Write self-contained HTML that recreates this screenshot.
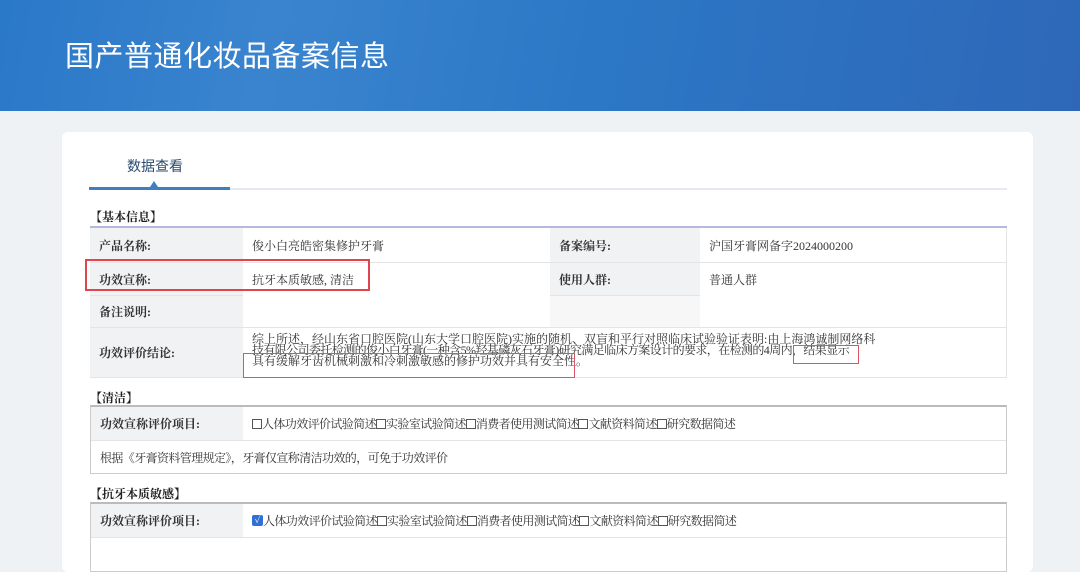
<!DOCTYPE html>
<html><head><meta charset="utf-8"><style>
*{margin:0;padding:0;box-sizing:border-box}
body{width:1080px;height:563px;overflow:hidden;background:#eef2f5;font-family:"Liberation Serif","Noto Serif CJK SC",serif;color:#333;position:relative}
.hdr{position:absolute;left:0;top:0;width:1080px;height:111px;background:linear-gradient(100deg,#2a78c8 0%,#3a84cf 25%,#2c78c6 55%,#2e67b8 100%)}
.hdr h1{position:absolute;left:65px;top:33px;font-size:29px;font-weight:normal;color:#fff;font-family:"Liberation Sans","Noto Sans CJK SC",sans-serif;letter-spacing:0.5px}
.card{position:absolute;left:62px;top:132px;width:971px;height:440px;background:#fff;border-radius:6px}
.abs{position:absolute}
.tab{left:127px;top:156px;font-size:14px;color:#2b4a6e;font-family:"Liberation Sans","Noto Sans CJK SC",sans-serif}
.sec{font-size:12px;font-weight:bold;color:#222}
.cell{position:absolute;font-size:12px;display:flex;align-items:center;padding-left:9px}
.lab{background:#f1f2f3;font-weight:bold;color:#333}
.red{position:absolute;border:2px solid #e0444c}
.redt{position:absolute;border:1.5px solid #d9566a}
.tight{letter-spacing:-0.6px}
.cb{display:inline-block;width:10px;height:10px;border:1px solid #555;vertical-align:-1px;background:#fff}
.cbc{display:inline-block;width:11px;height:11px;background:#2f6fd6;border-radius:2px;vertical-align:-1px;color:#fff;font-size:10px;line-height:11px;text-align:center}
</style></head><body>
<div class="hdr"><h1>国产普通化妆品备案信息</h1></div>
<div class="card"></div>
<div class="abs tab">数据查看</div>
<div class="abs" style="left:89px;top:188px;width:918px;height:2px;background:#e6eaee"></div>
<div class="abs" style="left:89px;top:187px;width:141px;height:3px;background:#3f7fbf"></div>
<div class="abs" style="left:150px;top:181px;width:0;height:0;border-left:4px solid transparent;border-right:4px solid transparent;border-bottom:6px solid #3f7fbf"></div>

<div class="abs sec" style="left:90px;top:208px">【基本信息】</div>
<div class="abs" style="left:90px;top:226px;width:917px;height:2px;background:#b8b8de"></div>
<div class="abs" style="left:90px;top:228px;width:917px;height:150px;border:1px solid #e4e4e4;border-top:none"></div>
<div class="cell lab" style="left:90px;top:228px;width:153px;height:34px">产品名称:</div>
<div class="cell" style="left:243px;top:228px;width:307px;height:34px">俊小白亮皓密集修护牙膏</div>
<div class="cell lab" style="left:550px;top:228px;width:150px;height:34px">备案编号:</div>
<div class="cell" style="left:700px;top:228px;width:307px;height:34px">沪国牙膏网备字2024000200</div>
<div class="cell lab" style="left:90px;top:262px;width:153px;height:33px;border-top:1px solid #e4e4e4">功效宣称:</div>
<div class="cell" style="left:243px;top:262px;width:307px;height:33px;border-top:1px solid #e4e4e4">抗牙本质敏感, 清洁</div>
<div class="cell lab" style="left:550px;top:262px;width:150px;height:33px;border-top:1px solid #e4e4e4">使用人群:</div>
<div class="cell" style="left:700px;top:262px;width:307px;height:33px;border-top:1px solid #e4e4e4">普通人群</div>
<div class="cell lab" style="left:90px;top:295px;width:153px;height:32px;border-top:1px solid #e4e4e4">备注说明:</div>
<div class="cell lab" style="left:550px;top:295px;width:150px;height:32px;border-top:1px solid #e4e4e4;background:#f7f7f7"></div>
<div class="cell lab" style="left:90px;top:327px;width:153px;height:50px;border-top:1px solid #e4e4e4">功效评价结论:</div>
<div class="abs" style="left:243px;top:327px;width:764px;height:1px;background:#e4e4e4"></div>
<div class="abs" style="left:252px;top:334px;font-size:12px;line-height:11px;width:700px;white-space:nowrap">综上所述，经山东省口腔医院(山东大学口腔医院)实施的随机、双盲和平行对照临床试验验证表明:由上海鸿诚制网络科<br><span class="tight">技有限公司委托检测的俊小白牙膏(一种含5%羟基磷灰石牙膏)研究满足临床方案设计的要求，在检测的4周内，结果显示</span><br>具有缓解牙齿机械刺激和冷刺激敏感的修护功效并具有安全性。</div>
<div class="red" style="left:85px;top:259px;width:285px;height:32px"></div>
<div class="redt" style="left:243px;top:353px;width:332px;height:25px"></div>
<div class="redt" style="left:793px;top:345px;width:66px;height:19px"></div>

<div class="abs sec" style="left:90px;top:389px">【清洁】</div>
<div class="abs" style="left:90px;top:405px;width:917px;height:69px;border:1px solid #ccc;border-top:2px solid #bbb"></div>
<div class="cell lab" style="left:91px;top:407px;width:152px;height:33px">功效宣称评价项目:</div>
<div class="cell tight" style="left:243px;top:407px;width:600px;height:33px"><span class="cb"></span>人体功效评价试验简述<span class="cb"></span>实验室试验简述<span class="cb"></span>消费者使用测试简述<span class="cb"></span>文献资料简述<span class="cb"></span>研究数据简述</div>
<div class="abs" style="left:91px;top:440px;width:915px;height:1px;background:#e4e4e4"></div>
<div class="cell tight" style="left:91px;top:441px;width:700px;height:32px">根据《牙膏资料管理规定》，牙膏仅宣称清洁功效的，可免于功效评价</div>

<div class="abs sec" style="left:90px;top:485px">【抗牙本质敏感】</div>
<div class="abs" style="left:90px;top:502px;width:917px;height:70px;border:1px solid #ccc;border-top:2px solid #bbb"></div>
<div class="cell lab" style="left:91px;top:504px;width:152px;height:33px">功效宣称评价项目:</div>
<div class="cell tight" style="left:243px;top:504px;width:600px;height:33px"><span class="cbc">✓</span>人体功效评价试验简述<span class="cb"></span>实验室试验简述<span class="cb"></span>消费者使用测试简述<span class="cb"></span>文献资料简述<span class="cb"></span>研究数据简述</div>
<div class="abs" style="left:91px;top:537px;width:915px;height:1px;background:#e4e4e4"></div>
</body></html>
